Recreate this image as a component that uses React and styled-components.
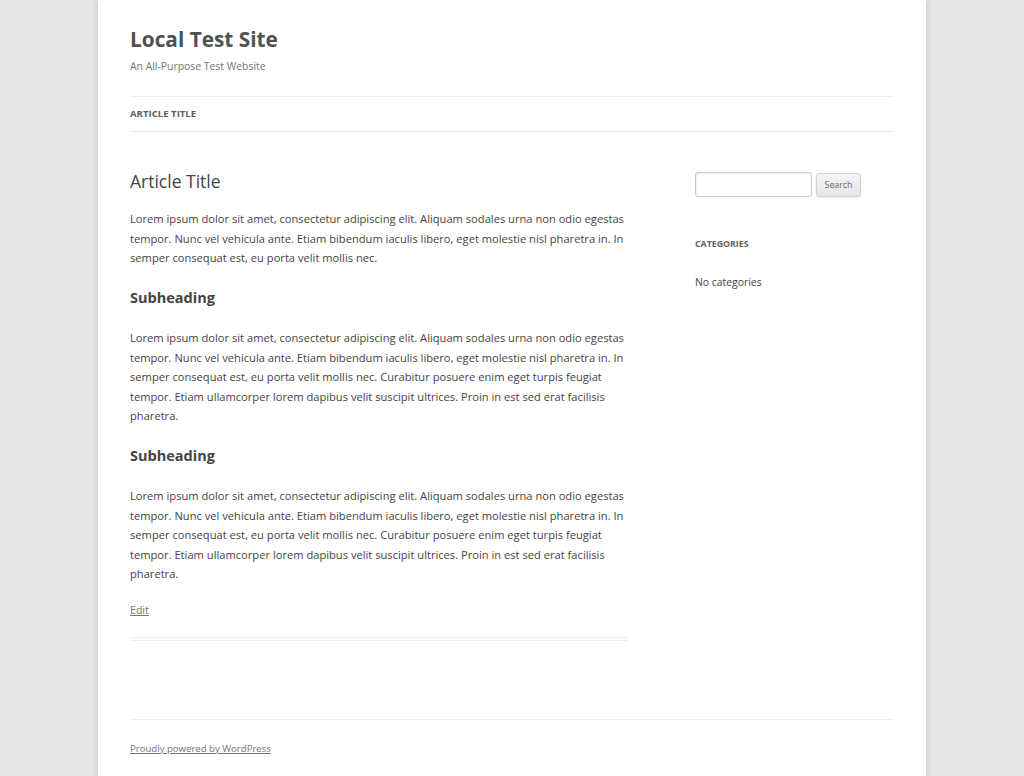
import React from 'react';
import styled, { createGlobalStyle } from 'styled-components';

const GlobalStyle = createGlobalStyle`
  html, body {
    margin: 0;
    padding: 0;
    background: #e6e6e6;
  }
  body {
    font-family: "Open Sans", "Liberation Sans", sans-serif;
    color: #444;
    font-size: 11.15px;
    line-height: 19.5px;
  }
`;

const lorem =
  'Lorem ipsum dolor sit amet, consectetur adipiscing elit. Aliquam sodales urna non odio egestas tempor. Nunc vel vehicula ante. Etiam bibendum iaculis libero, eget molestie nisl pharetra in. In semper consequat est, eu porta velit mollis nec.';
const loremLong =
  lorem +
  ' Curabitur posuere enim eget turpis feugiat tempor. Etiam ullamcorper lorem dapibus velit suscipit ultrices. Proin in est sed erat facilisis pharetra.';

function App() {
  return (
    <>
      <GlobalStyle />
      <Site>
        <Header>
          <SiteTitle>Local Test Site</SiteTitle>
          <Tagline>An All-Purpose Test Website</Tagline>
          <Nav>
            <NavLink>Article Title</NavLink>
          </Nav>
        </Header>

        <Content>
          <Primary>
            <Article>
              <EntryTitle>Article Title</EntryTitle>
              <Para>{lorem}</Para>
              <SubHeading>Subheading</SubHeading>
              <Para>{loremLong}</Para>
              <SubHeading>Subheading</SubHeading>
              <Para>{loremLong}</Para>
              <EntryMeta>
                <MetaLink>Edit</MetaLink>
              </EntryMeta>
            </Article>
          </Primary>

          <Sidebar>
            <SearchForm>
              <SearchInput type="text" />
              <SearchButton>Search</SearchButton>
            </SearchForm>
            <WidgetTitle>Categories</WidgetTitle>
            <WidgetText>No categories</WidgetText>
          </Sidebar>
        </Content>

        <Footer>
          <MetaLink>Proudly powered by WordPress</MetaLink>
        </Footer>
      </Site>
    </>
  );
}

const Site = styled.div`
  width: 828px;
  min-height: 776px;
  margin: 0 auto 0 98px;
  padding: 0 32px 0 32px;
  box-sizing: border-box;
  background: #fff;
  box-shadow: 0 2px 6px rgba(100, 100, 100, 0.3);
`;

const Header = styled.header`
  padding-top: 21px;
`;

const SiteTitle = styled.h1`
  margin: 0;
  font-size: 20.8px;
  line-height: 36px;
  font-weight: 700;
  color: #515151;
`;

const Tagline = styled.h2`
  margin: 0;
  font-size: 10.4px;
  line-height: 19.5px;
  font-weight: 400;
  color: #757575;
`;

const Nav = styled.nav`
  margin-top: 19.5px;
  height: 34px;
  border-top: 1px solid #ededed;
  border-bottom: 1px solid #ededed;
  display: flex;
  align-items: center;
`;

const NavLink = styled.span`
  font-size: 9.6px;
  font-weight: 700;
  text-transform: uppercase;
  color: #5e5e5e;
  line-height: 34px;
`;

const Content = styled.div`
  display: flex;
  justify-content: space-between;
  align-items: flex-start;
`;

const Primary = styled.main`
  width: 498px;
  padding-top: 37.5px;
`;

const Article = styled.article`
  padding-bottom: 19px;
  border-bottom: 4px double #ededed;
`;

const EntryTitle = styled.h1`
  margin: 0 0 16.5px;
  font-size: 17.5px;
  line-height: 23px;
  font-weight: 400;
  color: #444;
`;

const Para = styled.p`
  margin: 0 0 19.5px;
  color: #444;
`;

const SubHeading = styled.h2`
  margin: 0 0 19.5px;
  font-size: 14.5px;
  line-height: 21.5px;
  font-weight: 700;
  color: #444;
`;

const EntryMeta = styled.footer`
  font-size: 10.6px;
  line-height: 16px;
  margin-top: -1px;
`;

const MetaLink = styled.a`
  color: #757575;
  text-decoration: underline;
  cursor: pointer;
`;

const Sidebar = styled.aside`
  width: 199px;
  padding-top: 39px;
`;

const SearchForm = styled.form`
  display: flex;
  align-items: center;
  gap: 4px;
  margin: 0;
`;

const SearchInput = styled.input`
  width: 117px;
  height: 25px;
  box-sizing: border-box;
  border: 1px solid #ccc;
  border-radius: 3px;
  box-shadow: inset 1px 1px 2px rgba(0, 0, 0, 0.08);
  font-family: inherit;
  margin: 0;
  padding: 4px;
`;

const SearchButton = styled.button`
  width: 45px;
  height: 24px;
  margin-top: 2px;
  box-sizing: border-box;
  font-family: inherit;
  font-size: 8.8px;
  color: #6a6a6a;
  background: linear-gradient(to bottom, #f4f4f4, #e6e6e6);
  border: 1px solid #d2d2d2;
  border-radius: 3px;
  box-shadow: 0 1px 2px rgba(64, 64, 64, 0.1);
  padding: 0;
  cursor: pointer;
`;

const WidgetTitle = styled.h3`
  margin: 38px 0 18.5px;
  font-size: 8.8px;
  line-height: 19.5px;
  font-weight: 700;
  text-transform: uppercase;
  color: #636363;
`;

const WidgetText = styled.p`
  margin: 0;
  font-size: 10.4px;
  color: #444;
`;

const Footer = styled.footer`
  margin-top: 78px;
  border-top: 1px solid #ededed;
  padding-top: 18.5px;
  padding-bottom: 20px;
  font-size: 9.6px;
  line-height: 19.5px;
`;

export default App;
